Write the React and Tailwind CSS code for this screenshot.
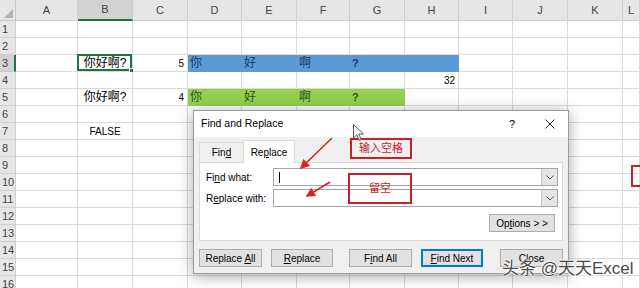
import React from 'react'

const COLS = ['A', 'B', 'C', 'D', 'E', 'F', 'G', 'H', 'I', 'J', 'K', 'L']

const BLUE = 'bg-[#5b9bd5] border-[#5b9bd5] text-[#1f3864]'
const GREEN = 'bg-[#92d050] border-[#92d050] text-[#2f5016]'

// sheet contents keyed by row, then column
const DATA = {
  3: {
    B: { t: '你好啊?', a: 'center', cjk: true, sel: true },
    C: { t: '5', a: 'right' },
    D: { t: '你', fill: BLUE, cjk: true },
    E: { t: '好', fill: BLUE, cjk: true },
    F: { t: '啊', fill: BLUE, cjk: true },
    G: { t: '?', fill: BLUE, bold: true },
    H: { t: '', fill: BLUE },
  },
  4: { H: { t: '32', a: 'right' } },
  5: {
    B: { t: '你好啊?', a: 'center', cjk: true },
    C: { t: '4', a: 'right' },
    D: { t: '你', fill: GREEN, cjk: true },
    E: { t: '好', fill: GREEN, cjk: true },
    F: { t: '啊', fill: GREEN, cjk: true },
    G: { t: '?', fill: GREEN, bold: true },
  },
  7: { B: { t: 'FALSE', a: 'center' } },
}

const GRID = 'grid grid-cols-[16px_62px_55px_55px_54px_55px_53px_55px_54px_54px_55px_55px_1fr]'

function Cell({ c }) {
  const align = c?.a === 'center' ? 'justify-center' : c?.a === 'right' ? 'justify-end pr-[3px]' : 'justify-start pl-[2px]'
  const border = c?.fill ? c.fill : 'border-[#dadada] text-black'
  const size = c?.cjk ? 'text-[12px]' : c?.bold ? 'text-[11px] font-bold' : 'text-[10px]'
  return (
    <div className={`relative h-[17px] flex items-center border-r border-b ${border} ${align} ${size}`}>
      {c?.t}
      {c?.sel && (
        <div className="absolute -left-[1px] -top-[1px] -right-0 -bottom-0 border-2 border-[#217346]">
          <div className="absolute -right-[4px] -bottom-[4px] w-[5px] h-[5px] bg-[#217346] border border-white" />
        </div>
      )}
    </div>
  )
}

function Sheet() {
  return (
    <div className="w-[640px] bg-white">
      <div className={`${GRID} h-[21px] bg-[#e6e6e6] text-[11px] text-[#444]`}>
        <div className="relative border-r border-b border-[#c8c8c8]">
          <svg className="absolute right-[2px] bottom-[2px]" width="9" height="9" viewBox="0 0 9 9">
            <path d="M9 0 L9 9 L0 9 Z" fill="#b4b4b4" />
          </svg>
        </div>
        {COLS.map(l => (
          <div
            key={l}
            className={`flex items-center justify-center border-r ${l === 'B' ? 'bg-[#d2d2d2] border-b-2 border-b-[#217346] border-r-[#c8c8c8]' : 'border-b border-[#d0d0d0]'}`}
          >
            {l}
          </div>
        ))}
      </div>
      {Array.from({ length: 16 }, (_, i) => i + 1).map(r => (
        <div key={r} className={GRID}>
          <div className={`h-[17px] flex items-center pl-[2px] text-[11px] text-[#444] border-b ${r === 3 ? 'bg-[#d2d2d2] border-r-2 border-r-[#217346] border-b-[#c8c8c8]' : 'bg-[#e6e6e6] border-r border-[#d0d0d0]'}`}>
            {r}
          </div>
          {COLS.map(l => (
            <Cell key={l} c={DATA[r]?.[l]} />
          ))}
        </div>
      ))}
    </div>
  )
}

function U({ children }) {
  return <span className="underline underline-offset-[1px]">{children}</span>
}

function Btn({ children, w, def }) {
  return (
    <div className={`${w} h-[18px] flex items-center justify-center bg-[#e1e1e1] ${def ? 'border-2 border-[#0078d7]' : 'border border-[#adadad]'}`}>
      <span className="whitespace-pre">{children}</span>
    </div>
  )
}

function Combo({ caret }) {
  return (
    <div className="flex-1 h-[18px] flex items-center bg-white border border-[#a5a5a5]">
      <div className="flex-1 pl-[5px] flex items-center">
        {caret && <div className="w-[1px] h-[11px] bg-black" />}
      </div>
      <div className="w-[16px] h-[16px] flex items-center justify-center bg-[#e5e5e5] border-l border-[#c6c6c6]">
        <svg width="8" height="5" viewBox="0 0 8 5">
          <path d="M0.5 0.5 L4 4 L7.5 0.5" fill="none" stroke="#555" strokeWidth="1" />
        </svg>
      </div>
    </div>
  )
}

function Dialog() {
  return (
    <div className="absolute left-[193px] top-[110px] w-[376px] h-[164px] flex flex-col bg-[#f0f0f0] border border-[#9c9c9c] shadow-[0_2px_14px_rgba(0,0,0,0.35)] text-[10px] text-black">
      <div className="h-[26px] flex items-center bg-white pl-[7px] pr-[13px]">
        <span className="text-[10.5px]">Find and Replace</span>
        <span className="ml-auto mr-[30px] text-[11px]">?</span>
        <svg width="10" height="10" viewBox="0 0 10 10">
          <path d="M0.5 0.5 L9.5 9.5 M9.5 0.5 L0.5 9.5" stroke="#222" strokeWidth="1" />
        </svg>
      </div>
      <div className="flex-1 flex flex-col px-[5px] pt-[3px]">
        <div className="flex items-end h-[22px]">
          <div className="w-[44px] h-[20px] flex items-center justify-center border-t border-l border-[#d9d9d9]">
            <span>Fin<U>d</U></span>
          </div>
          <div className="relative z-10 w-[52px] h-[23px] -mb-[1px] flex items-center justify-center bg-white border-t border-l border-r border-[#d9d9d9]">
            <span>Re<U>p</U>lace</span>
          </div>
        </div>
        <div className="h-[79px] flex flex-col bg-white border border-[#d9d9d9] pt-[5px] pl-[6px] pr-[4px]">
          <div className="flex items-center">
            <div className="w-[67px]">Fi<U>n</U>d what:</div>
            <Combo caret />
          </div>
          <div className="flex items-center mt-[3px]">
            <div className="w-[67px]">R<U>e</U>place with:</div>
            <Combo />
          </div>
          <div className="flex justify-end mt-[7px] pr-[3px]">
            <Btn w="w-[66px]">
              Op<U>t</U>ions &gt; &gt;
            </Btn>
          </div>
        </div>
        <div className="flex items-center mt-[8px]">
          <Btn w="w-[63px]">
            Replace <U>A</U>ll
          </Btn>
          <div className="w-[9px]" />
          <Btn w="w-[62px]">
            <U>R</U>eplace
          </Btn>
          <div className="w-[16px]" />
          <Btn w="w-[63px]">
            F<U>i</U>nd All
          </Btn>
          <div className="w-[9px]" />
          <Btn w="w-[62px]" def>
            <U>F</U>ind Next
          </Btn>
          <div className="w-[17px]" />
          <Btn w="w-[63px]">Close</Btn>
        </div>
      </div>
    </div>
  )
}

function Notes() {
  return (
    <>
      <svg className="absolute left-0 top-0 pointer-events-none" width="640" height="288">
        <defs>
          <marker id="ah" markerWidth="6" markerHeight="6" refX="5" refY="3" orient="auto" markerUnits="strokeWidth">
            <path d="M0 0 L6 3 L0 6 Z" fill="#d9251d" />
          </marker>
        </defs>
        <line x1="332" y1="138" x2="301" y2="168" stroke="#d9251d" strokeWidth="1.6" markerEnd="url(#ah)" />
        <line x1="330" y1="182" x2="307" y2="196" stroke="#d9251d" strokeWidth="1.6" markerEnd="url(#ah)" />
      </svg>
      <div className="absolute left-[350px] top-[138px] w-[62px] h-[21px] flex items-center justify-center border-2 border-[#c8202a] text-[#d0202a] text-[11px]">
        输入空格
      </div>
      <div className="absolute left-[348px] top-[173px] w-[64px] h-[31px] flex items-center justify-center border-2 border-[#c8202a] text-[#d0202a] text-[11px]">
        留空
      </div>
      <div className="absolute left-[631px] top-[165px] w-[20px] h-[22px] border-2 border-[#c8202a]" />
      <svg className="absolute left-[353px] top-[124px]" width="12" height="18" viewBox="0 0 12 18">
        <path d="M0.5 0.5 L0.5 14 L3.8 10.8 L6.2 16.5 L8.2 15.6 L5.9 10 L10.5 10 Z" fill="#fff" stroke="#555" strokeWidth="1" />
      </svg>
      <div className="absolute left-[502px] top-[257px] text-[17px] leading-[24px] text-[#4a4a4a] [text-shadow:0_0_2px_#fff,0_0_2px_#fff,0_0_3px_#fff]">
        头条 @天天Excel
      </div>
    </>
  )
}

export default function App() {
  return (
    <div className="relative w-[640px] h-[288px] overflow-hidden bg-white font-['Liberation_Sans','Noto_Sans_CJK_SC',sans-serif]">
      <Sheet />
      <Dialog />
      <Notes />
    </div>
  )
}
